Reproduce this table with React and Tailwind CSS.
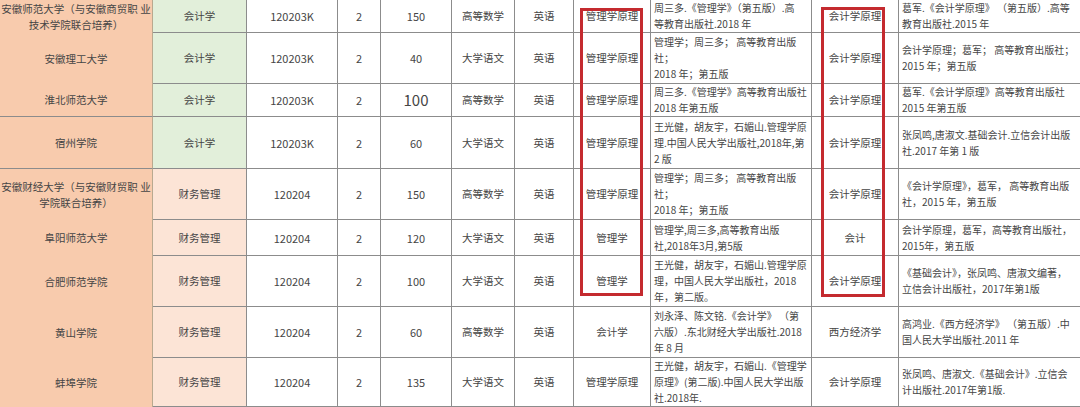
import React from 'react';

const cols = 'grid-cols-[153px_94px_91px_43px_71px_63px_59px_77px_161px_87px_181px]';
const rowsCls = 'grid-rows-[33px_51px_33px_52px_51px_36px_51px_51px_49px]';

// 每行数据：学校 / 专业 / 代码 / 学制 / 人数 / 文化课 / 外语 / 专业课1 / 教材1 / 专业课2 / 教材2
const rows = [
  {
    school: ['安徽师范大学（与安徽商贸职 业', '技术学院联合培养）'], major: '会计学', green: true, code: '120203K', num: '150', sub: '高等数学',
    c1: '管理学原理', b1: ['周三多.《管理学》（第五版）.高', '等教育出版社.2018 年'],
    c2: '会计学原理', b2: ['葛军.《会计学原理》 （第五版）.高等', '教育出版社.2015 年'],
  },
  {
    school: ['安徽理工大学'], major: '会计学', green: true, code: '120203K', num: '40', sub: '大学语文',
    c1: '管理学原理', b1: ['管理学；周三多； 高等教育出版', '社；', '2018 年；第五版'],
    c2: '会计学原理', b2: ['会计学原理；葛军； 高等教育出版社；', '2015 年；第五版'],
  },
  {
    school: ['淮北师范大学'], major: '会计学', green: true, code: '120203K', num: '100', big: true, sub: '高等数学', line: true,
    c1: '管理学原理', b1: ['周三多.《管理学》高等教育出版社', '2018 年第五版'],
    c2: '会计学原理', b2: ['葛军.《会计学原理》高等教育出版社', '2015 年第五版'],
  },
  {
    school: ['宿州学院'], major: '会计学', green: true, code: '120203K', num: '60', sub: '大学语文', line: true,
    c1: '管理学原理', b1: ['王光健，胡友宇，石媚山.管理学原', '理.中国人民大学出版社,2018年,第', '2 版'],
    c2: '会计学原理', b2: ['张凤鸣,唐淑文.基础会计.立信会计出版', '社.2017 年第 1 版'],
  },
  {
    school: ['安徽财经大学（与安徽财贸职 业', '学院联合培养）'], major: '财务管理', code: '120204', num: '150', sub: '高等数学',
    c1: '管理学原理', b1: ['管理学；周三多； 高等教育出版', '社；', '2018 年；第五版'],
    c2: '会计学原理', b2: ['《会计学原理》，葛军， 高等教育出版', '社，2015 年，第五版'],
  },
  {
    school: ['阜阳师范大学'], major: '财务管理', code: '120204', num: '120', sub: '大学语文',
    c1: '管理学', b1: ['管理学,周三多,高等教育出版', '社,2018年3月,第5版'],
    c2: '会计', b2: ['会计学原理，葛军，高等教育出版社，', '2015年，第五版'],
  },
  {
    school: ['合肥师范学院'], major: '财务管理', code: '120204', num: '100', sub: '大学语文',
    c1: '管理学', b1: ['王光健，胡友宇，石媚山.管理学原', '理，中国人民大学出版社，2018', '年，第二版。'],
    c2: '会计学原理', b2: ['《基础会计》，张凤鸣、唐淑文编著，', '立信会计出版社，2017年第1版'],
  },
  {
    school: ['黄山学院'], major: '财务管理', code: '120204', num: '60', sub: '高等数学',
    c1: '会计学', b1: ['刘永泽、陈文铭.《会计学》 （第', '六版）.东北财经大学出版社.2018', '年 8 月'],
    c2: '西方经济学', b2: ['高鸿业.《西方经济学》 （第五版）.中', '国人民大学出版社.2011 年'],
  },
  {
    school: ['蚌埠学院'], major: '财务管理', code: '120204', num: '135', sub: '大学语文',
    c1: '管理学原理', b1: ['王光健，胡友宇，石媚山.《管理学', '原理》(第二版).中国人民大学出版', '社.2018年.'],
    c2: '会计学原理', b2: ['张凤鸣、唐淑文.《基础会计》.立信会', '计出版社.2017年第1版.'],
  },
];

const cell = 'flex items-center justify-center text-center border-r border-b border-[#8c8c8c]';
const book = 'flex items-center justify-start text-left pl-[3px] text-[10px] border-r border-b border-[#8c8c8c] overflow-hidden';

function Lines({ lines }) {
  return (
    <div className="flex flex-col">
      {lines.map((l, i) => (
        <span key={i} className="whitespace-nowrap">{l}</span>
      ))}
    </div>
  );
}

export default function App() {
  return (
    <div className="relative w-[1080px] h-[407px] overflow-hidden bg-white text-[10.5px] leading-[16px] text-[#454545] font-['Noto_Sans_CJK_SC','Noto_Sans',sans-serif]">
      <div className={`grid ${cols} ${rowsCls}`}>
        {rows.map((r, i) => (
          <React.Fragment key={i}>
            <div className={`flex items-center justify-center text-center bg-[#f8cbad] border-r border-[#b9a98f] ${r.line ? 'border-b border-b-[#8c8c8c]' : ''}`}>
              <Lines lines={r.school} />
            </div>
            <div className={`${cell} ${r.green ? 'bg-[#e2efda]' : 'bg-[#fce4d6]'}`}>{r.major}</div>
            <div className={`${cell} text-[11px]`}>{r.code}</div>
            <div className={`${cell} text-[11px]`}>2</div>
            <div className={`${cell} ${r.big ? 'text-[15px]' : 'text-[11px]'}`}>{r.num}</div>
            <div className={cell}>{r.sub}</div>
            <div className={cell}>英语</div>
            <div className={cell}>{r.c1}</div>
            <div className={book}>
              <Lines lines={r.b1} />
            </div>
            <div className={cell}>{r.c2}</div>
            <div className={`${book} border-r-0`}>
              <Lines lines={r.b2} />
            </div>
          </React.Fragment>
        ))}
      </div>

      {/* 红色标注框 */}
      <div className="absolute left-[580px] top-[8px] w-[63px] h-[288px] border-[3px] border-[#c42a2f]" />
      <div className="absolute left-[821px] top-[7px] w-[64px] h-[290px] border-[3px] border-[#c42a2f]" />
    </div>
  );
}
